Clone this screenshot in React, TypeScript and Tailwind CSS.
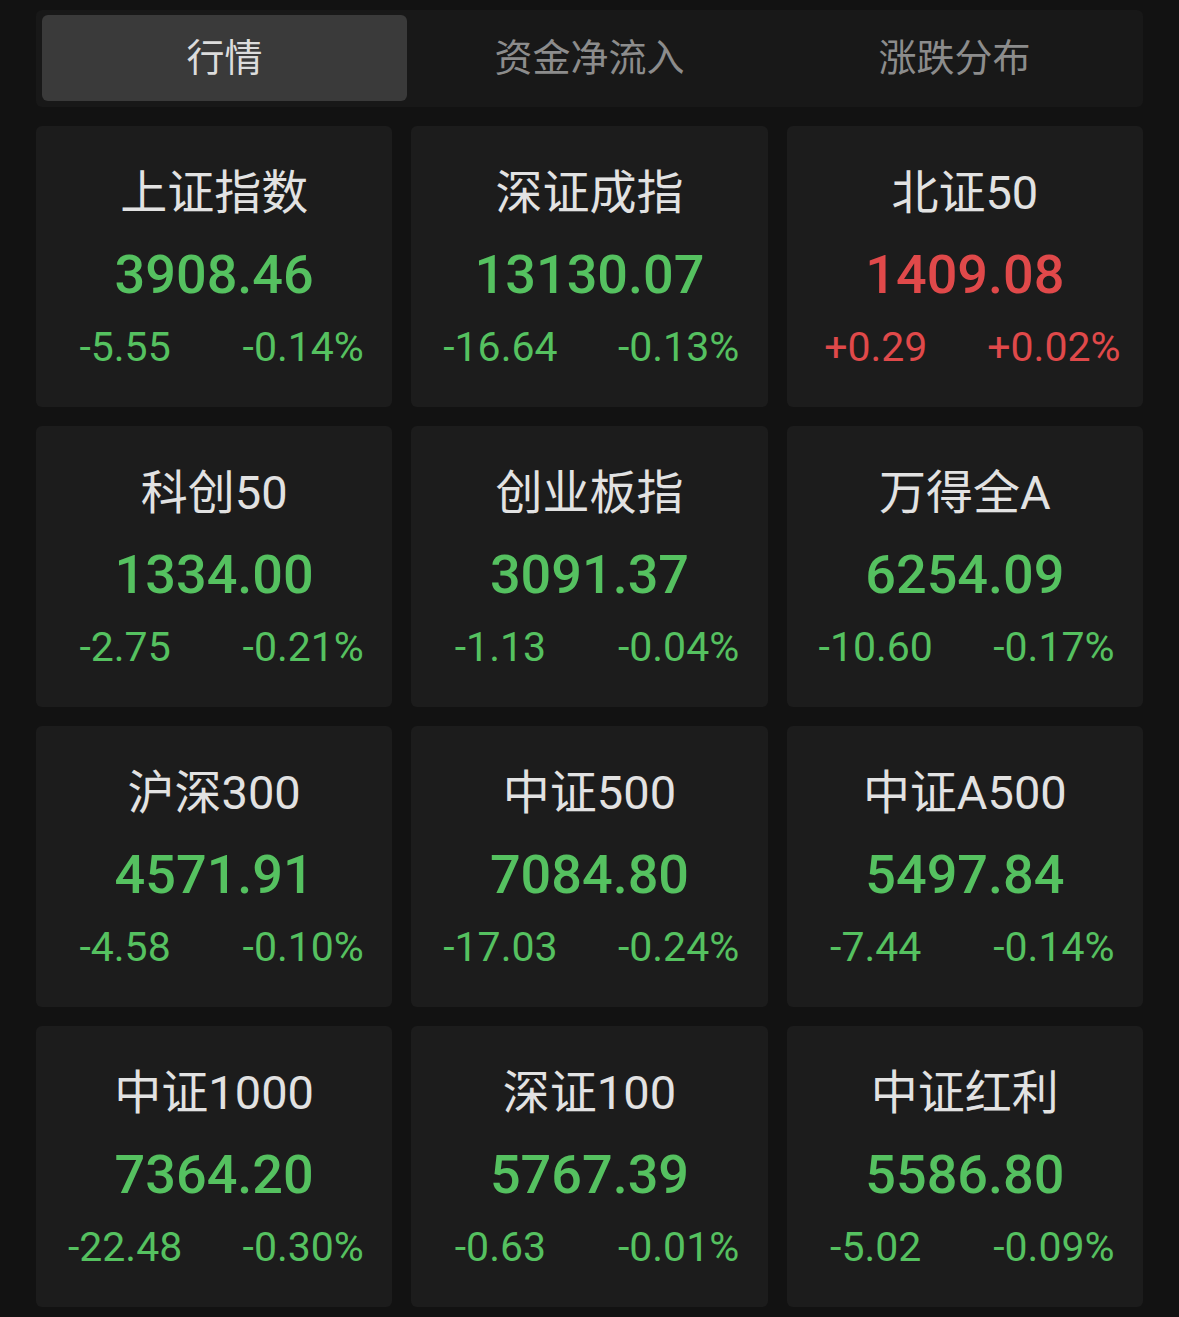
import React from "react";

type Item = { name: string; price: string; chg: string; pct: string; up?: boolean };

const items: Item[] = [
  { name: "上证指数", price: "3908.46", chg: "-5.55", pct: "-0.14%" },
  { name: "深证成指", price: "13130.07", chg: "-16.64", pct: "-0.13%" },
  { name: "北证50", price: "1409.08", chg: "+0.29", pct: "+0.02%", up: true },
  { name: "科创50", price: "1334.00", chg: "-2.75", pct: "-0.21%" },
  { name: "创业板指", price: "3091.37", chg: "-1.13", pct: "-0.04%" },
  { name: "万得全A", price: "6254.09", chg: "-10.60", pct: "-0.17%" },
  { name: "沪深300", price: "4571.91", chg: "-4.58", pct: "-0.10%" },
  { name: "中证500", price: "7084.80", chg: "-17.03", pct: "-0.24%" },
  { name: "中证A500", price: "5497.84", chg: "-7.44", pct: "-0.14%" },
  { name: "中证1000", price: "7364.20", chg: "-22.48", pct: "-0.30%" },
  { name: "深证100", price: "5767.39", chg: "-0.63", pct: "-0.01%" },
  { name: "中证红利", price: "5586.80", chg: "-5.02", pct: "-0.09%" },
];

const font = { fontFamily: 'Roboto, "Noto Sans CJK SC", sans-serif' };

function Card({ it }: { it: Item }) {
  const color = it.up ? "text-[#e0494a]" : "text-[#55c160]";
  return (
    <div className="h-[281px] rounded-[6px] bg-[#1c1c1c] flex flex-col items-center">
      <div className="mt-[40px] h-[52px] flex items-center text-[47px] leading-none text-[#e2e2e2]">{it.name}</div>
      <div className={`mt-[31px] h-[52px] flex items-center text-[54px] leading-none font-medium ${color}`}>{it.price}</div>
      <div className={`mt-[26px] w-full grid grid-cols-2 text-[41px] leading-none ${color}`}>
        <div className="text-center">{it.chg}</div>
        <div className="text-center">{it.pct}</div>
      </div>
    </div>
  );
}

export default function App() {
  return (
    <div className="w-[1179px] h-[1317px] bg-[#121212] overflow-hidden" style={font}>
      <div className="pt-[10px] pl-[36px] pr-[36px]">
        <div className="h-[97px] rounded-[6px] bg-[#181818] p-[5px_6px_6px_6px] grid grid-cols-3">
          <div className="rounded-[6px] bg-[#3a3a3a] flex items-center justify-center text-[38px] text-[#dcdcdc]">行情</div>
          <div className="flex items-center justify-center text-[38px] text-[#8c8c8c]">资金净流入</div>
          <div className="flex items-center justify-center text-[38px] text-[#8c8c8c]">涨跌分布</div>
        </div>
      </div>
      <div className="mt-[19px] px-[36px] grid grid-cols-3 gap-x-[19px] gap-y-[19px]">
        {items.map((it) => (
          <Card key={it.name} it={it} />
        ))}
      </div>
    </div>
  );
}
